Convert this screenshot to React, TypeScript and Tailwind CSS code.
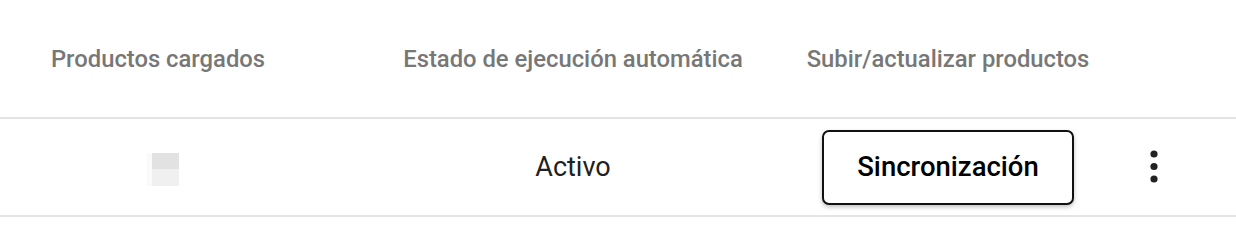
const headers = ['Productos cargados', 'Estado de ejecución automática', 'Subir/actualizar productos'];

function MoreIcon() {
  return (
    <svg width="8" height="34" viewBox="0 0 8 34" className="text-[#222]">
      <circle cx="4" cy="4" r="3.6" fill="currentColor" />
      <circle cx="4" cy="16.5" r="3.6" fill="currentColor" />
      <circle cx="4" cy="29" r="3.6" fill="currentColor" />
    </svg>
  );
}

export default function App() {
  return (
    <div className="h-[244px] w-[1236px] bg-white font-['Roboto',sans-serif]">
      <div className="grid h-[119px] grid-cols-[326px_494px_256px_1fr] items-center border-b-2 border-[#e4e4e4] pt-[2px]">
        {headers.map((h, i) => (
          <div key={h} className={`flex justify-center ${i === 0 ? 'pr-[10px]' : ''}`}>
            <span className="whitespace-nowrap text-[23.8px] font-medium text-[#777]">{h}</span>
          </div>
        ))}
        <div />
      </div>
      <div className="grid h-[98px] grid-cols-[326px_494px_256px_1fr] items-center border-b-2 border-[#e4e4e4]">
        <div className="flex justify-center pt-[4px]">
          <div className="flex">
            <div className="h-[33px] w-[5px] bg-[#fafafa]" />
            <div className="flex w-[27px] flex-col">
              <div className="h-[16px] bg-[#e2e2e2]" />
              <div className="h-[17px] bg-[#f0f0f0]" />
            </div>
          </div>
        </div>
        <div className="text-center text-[27px] text-[#212121]">Activo</div>
        <div className="flex justify-center">
          <button className="h-[75px] w-[252px] rounded-[7px] border-2 border-[#111] bg-white text-[27.5px] font-medium text-black shadow-[0_2px_4px_rgba(0,0,0,0.25)]">
            Sincronización
          </button>
        </div>
        <div className="flex justify-center pr-[4px]">
          <MoreIcon />
        </div>
      </div>
    </div>
  );
}
